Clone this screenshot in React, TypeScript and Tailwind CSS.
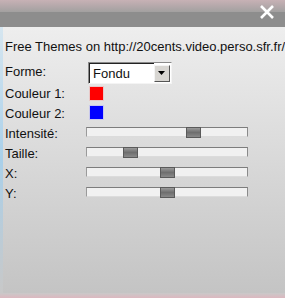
const Slider = ({ pos }: { pos: number }) => {
  return (
    <div className="relative mt-[3px] h-[10px] w-[162px] border-t border-l border-t-[#7d7d7d] border-l-[#9a9a9a] border-r border-r-[#8a8a8a] border-b border-b-[#dcdcdc] bg-[#f1f1f1]">
      <div
        className="absolute top-[-1px] h-[11px] w-[15px] border border-[#5a5a5a] bg-gradient-to-b from-[#9a9a9a] via-[#6f6f6f] to-[#8a8a8a]"
        style={{ left: pos }}
      />
    </div>
  );
};

const Row = ({ label, children }: { label: string; children: React.ReactNode }) => {
  return (
    <div className="flex h-[20px] flex-row">
      <div className="w-[81px] shrink-0 leading-[20px]">{label}</div>
      {children}
    </div>
  );
};

export default function App() {
  return (
    <div
      className="flex h-[298px] w-[285px] flex-col overflow-hidden bg-[#c8c8c8] text-[13px] text-[#111]"
      style={{ fontFamily: '"Liberation Sans", Arial, sans-serif' }}
    >
      <div className="flex h-[27px] shrink-0 flex-col">
        <div className="h-[12px] bg-gradient-to-b from-[#c7b1b5] to-[#a2a0a0]" />
        <div className="flex h-[15px] flex-row items-start justify-end bg-[#8d8d8d] pr-[10px]">
          <svg width="16" height="16" viewBox="0 0 16 16" className="-mt-[8px]">
            <path d="M2 2 L14 14 M14 2 L2 14" stroke="#ffffff" strokeWidth="2.6" />
          </svg>
        </div>
      </div>
      <div className="flex flex-1 flex-row">
        <div className="w-[3px] shrink-0 bg-gradient-to-b from-[#d6e6f0] via-[#a9d0ea] to-[#c8c8c8]" />
        <div className="flex flex-1 flex-col bg-gradient-to-b from-[#eeeeee] to-[#c4c4c4] pl-[2px] pt-[10px]">
          <div className="h-[20px] whitespace-nowrap leading-[20px]">
            Free Themes on http://20cents.video.perso.sfr.fr/
          </div>
          <div className="mt-[5px] flex h-[22px] flex-row">
            <div className="w-[83px] shrink-0 leading-[20px]">Forme:</div>
            <div className="flex h-[22px] w-[84px] flex-row items-center border-t border-l border-t-[#8a8a8a] border-l-[#8a8a8a] border-r border-b border-r-[#f4f4f4] border-b-[#f4f4f4] bg-white">
              <div className="flex h-full flex-1 flex-row items-center border-t border-l border-[#222] pl-[3px] leading-none">
                Fondu
              </div>
              <div className="mr-[1px] flex h-[17px] w-[16px] items-center justify-center border border-t-[#f4f4f4] border-l-[#f4f4f4] border-r-[#555] border-b-[#555] bg-[#d8d6d2]">
                <svg width="8" height="4" viewBox="0 0 8 4">
                  <path d="M0 0 H7 L3.5 4 Z" fill="#000" />
                </svg>
              </div>
            </div>
          </div>
          <Row label="Couleur 1:">
            <div className="ml-[3px] mt-[2px] h-[15px] w-[15px] border border-[#e9c8c8] bg-[#ff0000]" />
          </Row>
          <Row label="Couleur 2:">
            <div className="ml-[3px] mt-[1px] h-[15px] w-[15px] border border-[#c8c8ee] bg-[#0000ff]" />
          </Row>
          <Row label="Intensité:">
            <Slider pos={99} />
          </Row>
          <Row label="Taille:">
            <Slider pos={36} />
          </Row>
          <Row label="X:">
            <Slider pos={73} />
          </Row>
          <Row label="Y:">
            <Slider pos={73} />
          </Row>
        </div>
        <div className="w-[2px] shrink-0 bg-[#bdbdbd]" />
      </div>
      <div className="h-[5px] shrink-0 bg-gradient-to-b from-[#c9c9c9] to-[#dcb7bf]" />
    </div>
  );
}
